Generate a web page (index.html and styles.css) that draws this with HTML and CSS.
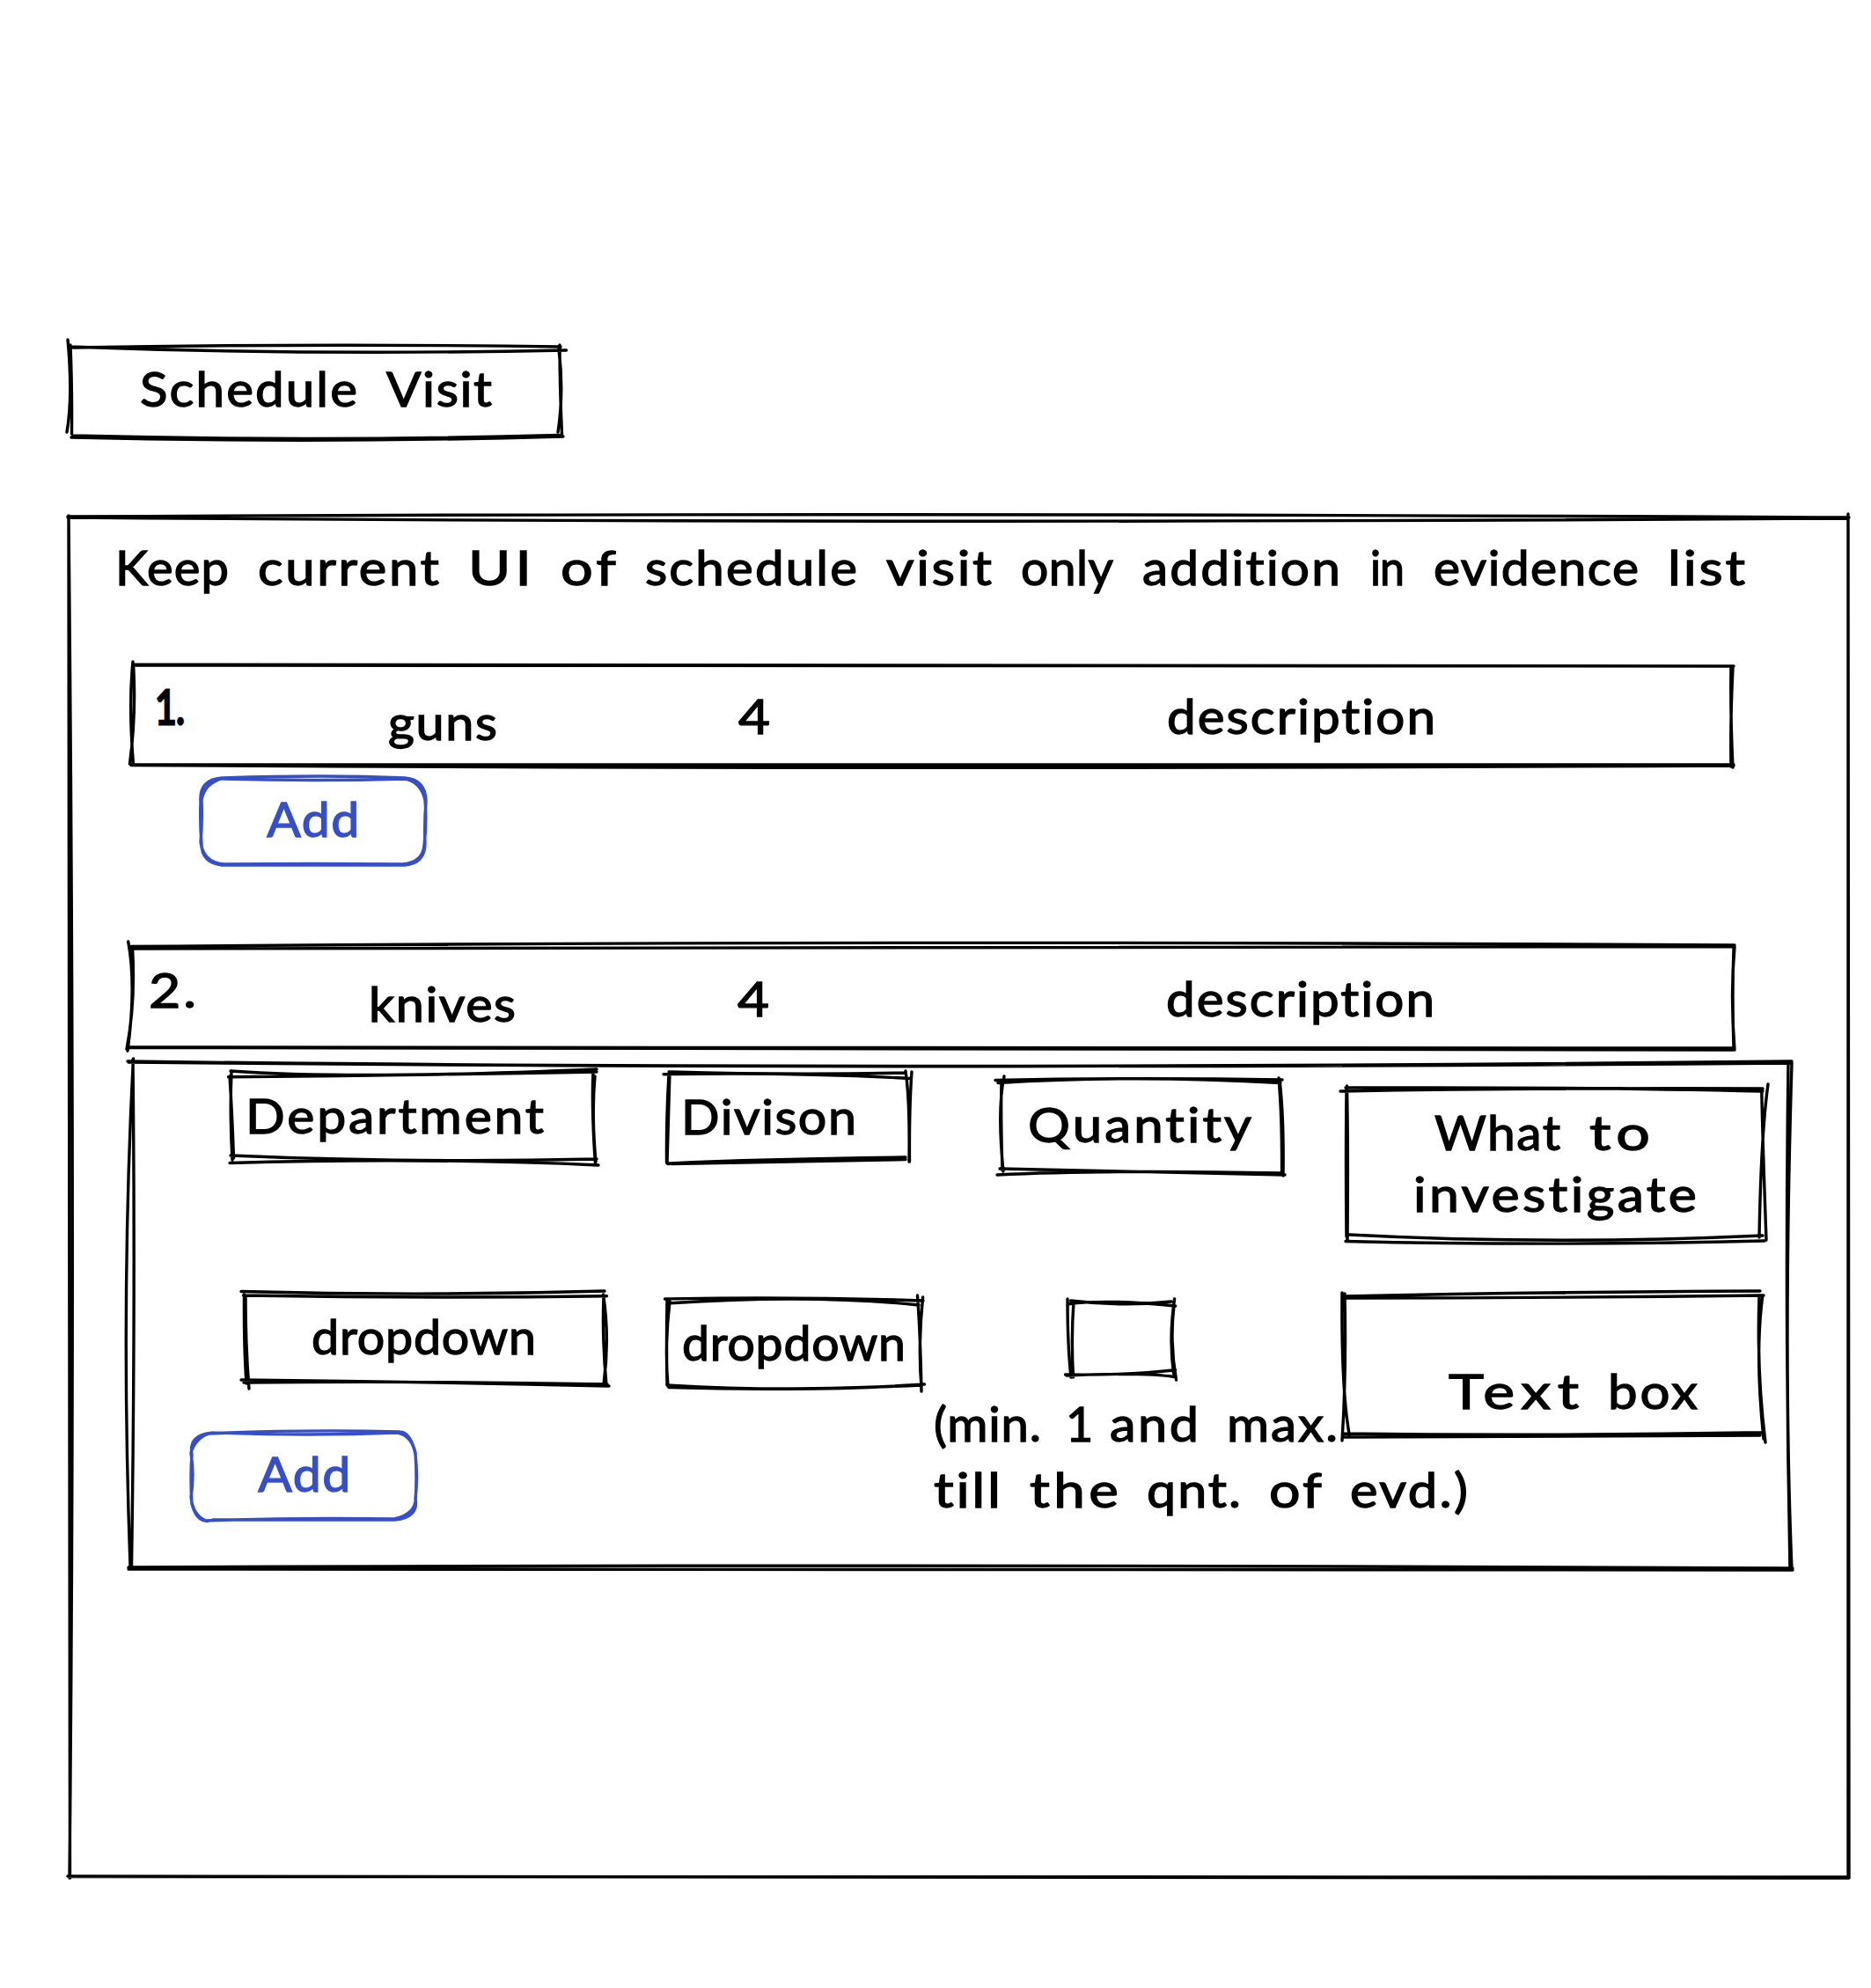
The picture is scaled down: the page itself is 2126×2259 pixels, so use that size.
FILE: index.html
```html
<!DOCTYPE html>
<html lang="en">
<head>
<meta charset="utf-8">
<title>Schedule Visit</title>
<link rel="stylesheet" href="styles.css">
</head>
<body>
<main class="page">
  <header class="sketch schedule">
    <svg class="ink" viewBox="78 393 560 104"><path d="M77 386Q83 450 76 491M80 392Q82 440 81.500 493M83 395Q360 390 637 394M79 394Q352 404 643.500 398M636 392Q636 440 638.600 496M635 397Q641 445 634 491M81 497Q360 504 640 496M83 495Q359 502 636 494.500"/></svg>
    <h1 class="label"><span data-w="247">Schedule</span><span data-w="120">Visit</span></h1>
  </header>

  <section class="sketch frame">
    <svg class="ink" viewBox="78 587 2022 1547"><path d="M77 587Q1000 582 2101 588M77 588Q1000 596 2099 589M78 586Q79 1300 79.500 2134M78 586Q86 1400 79 2134M2100 584Q2103 1300 2100 2134M2100 586Q2104 1600 2101 2134M77 2132Q1000 2132 2101 2134M79 2132.500Q1000 2132 2100 2133"/></svg>
    <p class="label title"><span data-w="129">Keep</span><span data-w="206">current</span><span data-w="72">UI</span><span data-w="63">of</span><span data-w="241">schedule</span><span data-w="120">visit</span><span data-w="105">only</span><span data-w="226">addition</span><span data-w="39">in</span><span data-w="233">evidence</span><span data-w="88">list</span></p>

    <div class="sketch row row-guns">
      <svg class="ink" viewBox="151 756 1817 114"><path d="M151 752Q146 800 151.500 869M151.500 755Q155 810 147.500 868M151 755Q1000 756 1970 757M151 756Q1000 757.500 1970 757M149 869Q1000 869 1970 869M149 869.500Q1000 875 1970 870M1967 757Q1966 810 1969 872M1969 759Q1966 820 1967 871"/></svg>
      <span class="label number"><span data-w="34">1.</span></span>
      <span class="label name"><span data-w="124">guns</span></span>
      <span class="label count"><span class="digit">4</span></span>
      <span class="label desc"><span data-w="306">description</span></span>
    </div>
    <button class="sketch add">
      <svg class="ink" viewBox="228 883 256 100"><path d="M252 884Q370 880 460 884Q484 886 484 911Q482 935 483 958Q483 981 460 983Q360 983 252 983Q229 980 229 959Q227 935 228 911Q226 886 252 884M252 885Q355 888 460 885Q478 888 483 909Q485 935 482 961Q480 980 458 982Q350 981 254 982Q231 980 228 957Q230 935 229 909Q232 890 254 884"/></svg>
      <span class="label"><span data-w="105">Add</span></span>
    </button>

    <div class="sketch row row-knives">
      <svg class="ink" viewBox="151 1076 1817 115"><path d="M145.700 1070Q155 1120 145 1194M150.600 1078Q154 1140 144 1192M147 1075.500Q1000 1068 1971 1074M147 1078Q1000 1080 1971 1075.500M145 1190Q1000 1190.500 1970 1191M145 1190.500Q1000 1193 1969 1193M1971 1076Q1966 1130 1971 1193M1970 1078Q1968 1130 1970 1192"/></svg>
      <span class="label number"><span data-w="54">2.</span></span>
      <span class="label name"><span data-w="167">knives</span></span>
      <span class="label count"><span class="digit">4</span></span>
      <span class="label desc"><span data-w="306">description</span></span>
    </div>

    <div class="sketch panel">
      <svg class="ink" viewBox="148 1208 1887 575"><path d="M145 1206Q1000 1217 2036 1206M146 1207Q1000 1216 2036 1208M151.500 1203Q137 1480 148 1780M151 1204Q154 1480 149.500 1782M2032 1207Q2028 1500 2034 1783M2036 1208Q2026 1540 2036 1784M146 1781Q1000 1777 2037 1782M146 1783Q1000 1787.500 2037 1784"/></svg>
      <div class="fields">
        <div class="sketch head department">
          <svg class="ink" viewBox="263 1220 413 100"><path d="M262 1217Q400 1227 678 1215M259.500 1223.700Q470 1222 678 1218M263 1217Q261 1270 264 1318M261 1223Q264 1270 265.500 1316M674 1217Q672 1260 676.500 1323M676 1223Q672 1265 677 1320M262 1313Q470 1322 678 1317M261 1321.500Q480 1315 680 1324"/></svg>
          <span class="label"><span data-w="339">Department</span></span>
        </div>
        <div class="sketch head division">
          <svg class="ink" viewBox="758 1220 275 100"><path d="M754 1220.700Q900 1218 1035 1225.500M760 1218Q900 1222 1029 1219M761 1218Q760 1260 758 1322M760 1221Q757 1270 757.500 1321M1029 1217Q1034 1250 1033 1320M1036 1218Q1033 1260 1033.500 1320M759 1322Q860 1317 1029 1315M759 1322.500Q900 1320 1029 1317.500"/></svg>
          <span class="label"><span data-w="199">Divison</span></span>
        </div>
        <div class="sketch head quantity">
          <svg class="ink" viewBox="1138 1228 318 104"><path d="M1131 1227.500Q1290 1224 1457 1227M1134 1230.500Q1290 1221 1455 1230.500M1141 1223Q1133 1260 1140 1331M1138 1228Q1137 1270 1139 1330M1453 1225Q1457 1270 1456.500 1335M1454 1227Q1459 1270 1458 1336M1136 1328Q1290 1332 1460 1335M1133 1335Q1260 1329 1455 1333"/></svg>
          <span class="label"><span data-w="255">Quantity</span></span>
        </div>
        <div class="sketch head investigate">
          <svg class="ink" viewBox="1530 1237 472 170"><path d="M1523 1240Q1750 1236 2003 1237M1529 1236Q1800 1235 2003 1240M1530.500 1234Q1532 1300 1531 1410M1530 1238Q1529 1320 1530 1405M2001.700 1237Q2003 1300 2007 1409M2009 1232Q2001 1290 1999 1406M1533 1403Q1760 1415 2003 1404M1529 1410.500Q1760 1416 2005 1410"/></svg>
          <span class="label"><span data-w="143">What</span><span data-w="69">to</span></span>
          <span class="label"><span data-w="323">investigate</span></span>
        </div>

        <div class="sketch field dropdown-department">
          <svg class="ink" viewBox="278 1472 410 100"><path d="M274 1467.500Q480 1473 687 1467M276.500 1472Q480 1475.500 689.500 1472.700M277.500 1471Q277 1530 280 1572M279 1473Q279 1530 283 1578M685.500 1471Q693 1520 686 1573M686 1472Q684 1520 689 1574M274 1568Q480 1570 692 1575M277 1571Q480 1569 690 1573"/></svg>
          <span class="label"><span data-w="255">dropdown</span></span>
        </div>
        <div class="sketch field dropdown-division">
          <svg class="ink" viewBox="758 1478 289 98"><path d="M755.500 1476Q900 1473 1049 1478M759 1481Q920 1470 1044 1483M761 1479Q755 1530 759 1575M758 1477Q757 1530 758 1574M1042.500 1472Q1046 1520 1047 1581M1048.600 1474Q1043 1530 1047 1576M759 1574Q900 1583 1050.500 1573M760 1576.500Q900 1581 1047 1574"/></svg>
          <span class="label"><span data-w="254">dropdown</span></span>
        </div>
        <div class="amount">
          <div class="sketch amount-box">
            <svg class="ink" viewBox="1217 1479 117 85"><path d="M1214 1481.700Q1260 1476 1335.600 1484M1216.600 1478Q1275 1485 1331 1479M1213 1476Q1213 1530 1217 1565M1220 1479Q1217 1520 1219.500 1565M1334.600 1476Q1328 1520 1333.600 1561M1334 1483Q1329 1525 1336.500 1568M1210.500 1562Q1280 1563 1335.600 1556.700M1212 1563Q1300 1559 1335.600 1564.700"/></svg>
          </div>
          <div class="note">
            <p class="label"><span data-w="122">(min.</span><span class="one">1</span><span data-w="101">and</span><span data-w="126">max.</span></p>
            <p class="label"><span data-w="77">till</span><span data-w="101">the</span><span data-w="107">qnt.</span><span data-w="60">of</span><span data-w="134">evd.)</span></p>
          </div>
        </div>
        <div class="sketch field textbox">
          <svg class="ink" viewBox="1527 1472 475 160"><path d="M1527.500 1473Q1750 1468 2000 1467M1527 1475Q1760 1475 2004 1472M1525 1469Q1524 1580 1533.500 1632M1528 1470Q1530 1560 1525 1637M1999 1472Q1996 1560 2006 1639M2002.600 1474Q1994 1540 2004 1635M1526 1629Q1760 1632 2003 1627.700M1527 1633Q1760 1633 2000 1631"/></svg>
          <span class="label"><span data-w="148">Text</span><span data-w="102">box</span></span>
        </div>
      </div>
      <button class="sketch add add-entry">
        <svg class="ink" viewBox="218 1627 256 100"><path d="M242 1628Q350 1632 452 1628Q469 1632 472 1653Q475 1678 472 1703Q476 1724 449 1727Q340 1727 242 1727Q225 1734 218 1709Q216 1680 218 1653Q214 1630 242 1628M236 1629Q350 1624 454 1627Q466 1627 472 1651Q474 1680 472 1706Q470 1721 448 1726Q340 1724 234 1728Q219 1722 217 1701Q221 1676 217 1651Q222 1634 238 1629"/></svg>
        <span class="label"><span data-w="105">Add</span></span>
      </button>
    </div>
  </section>
</main>
<script src="lettering.js"></script>
</body>
</html>
```

FILE: styles.css
```css
* { box-sizing: border-box; margin: 0; padding: 0; }

body {
  background: #fff;
  color: #000;
  font-family: Lato, "Open Sans", sans-serif;
  font-size: 54px;
  line-height: 78px;
}

.page { width: 2126px; height: 2259px; padding: 393px 0 0 78px; overflow: hidden; }

.sketch { position: relative; }

/* hand-drawn outline laid over each box */
.ink {
  position: absolute;
  inset: 0;
  width: 100%;
  height: 100%;
  overflow: visible;
  fill: none;
  stroke: currentColor;
  stroke-width: 3.4;
  stroke-linecap: round;
  pointer-events: none;
}

.label {
  display: flex;
  gap: 33px;
  height: 70px;
  font-size: 54px;
  font-weight: 400;
  white-space: nowrap;
  -webkit-text-stroke: 1.3px currentColor;
}

.label > span { flex: none; transform-origin: 0 50%; }

.schedule { width: 560px; height: 104px; padding: 10px 0 0 81px; }

.frame { width: 2022px; height: 1547px; margin-top: 90px; }
.title { padding-left: 53px; height: 89px; padding-top: 19px; }

.row {
  display: grid;
  grid-template-columns: 263px 398px 487px 1fr;
  width: 1817px;
  margin-left: 73px;
  padding-left: 27px;
}
.row-guns { height: 114px; margin-top: 80px; padding-top: 10px; }
.row-guns .number { margin: -2px 0 0 -2px; -webkit-text-stroke-width: 3px; }
.row-guns .name { margin-top: 16px; }
.row-guns .count, .row-guns .desc { margin-top: 9px; }

.row-knives {
  grid-template-columns: 250px 419px 487px 1fr;
  height: 115px;
  margin-top: 93px;
  padding: 10px 0 0 18px;
}
.row-knives .name { margin-top: 16px; }
.row-knives .count, .row-knives .desc { margin-top: 10px; }

.digit { transform: scaleX(1.15); }

.add {
  display: flex;
  justify-content: center;
  width: 256px;
  height: 100px;
  margin: 13px 0 0 150px;
  padding: 9px 6px 0 0;
  border: 0;
  background: none;
  color: #364fc7;
  font: inherit;
}

.panel { width: 1887px; height: 575px; margin: 17px 0 0 70px; padding-top: 12px; }

.fields {
  display: grid;
  grid-template-columns: 495px 375px 397px 475px;
  grid-template-rows: 252px 160px;
  align-items: start;
  padding-left: 115px;
}

.department { width: 413px; height: 100px; padding: 9px 0 0 16px; }
.division { width: 275px; height: 100px; padding: 10px 0 0 16px; }
.quantity { width: 318px; height: 104px; margin: 8px 0 0 5px; padding: 11px 0 0 30px; }
.investigate { width: 472px; height: 170px; margin-top: 17px; padding: 11px 0 0 76px; }
.investigate .label:first-of-type { height: 70px; padding-left: 24px; }

.dropdown-department { width: 410px; height: 100px; margin-left: 15px; padding: 8px 0 0 76px; }
.dropdown-division { width: 289px; height: 98px; margin-top: 6px; padding: 9px 0 0 17px; }
.amount-box { width: 117px; height: 85px; margin: 7px 0 0 84px; }
.textbox { width: 475px; height: 160px; margin-left: -3px; padding: 70px 0 0 119px; }

.note { margin: 15px 0 0 -72px; }
.note .label { height: 75px; gap: 32px; }
.one { width: 32px; margin: 0 -14px 0 -4px; }

.add-entry { margin: -5px 0 0 70px; }
```

FILE: lettering.js
```javascript
// Fits each word to its lettered width, partly by letter spacing and partly by glyph width.
document.querySelectorAll('[data-w]').forEach(function (word) {
  var target = Number(word.dataset.w);
  var count = word.textContent.length;
  var natural = word.getBoundingClientRect().width;
  var spacing = Math.max(-1, (target - natural) * 0.5 / count);
  word.style.letterSpacing = spacing + 'px';
  var spaced = natural + spacing * (count - 1);
  word.style.width = target + 'px';
  word.style.transform = 'scaleX(' + target / spaced + ')';
});
```
